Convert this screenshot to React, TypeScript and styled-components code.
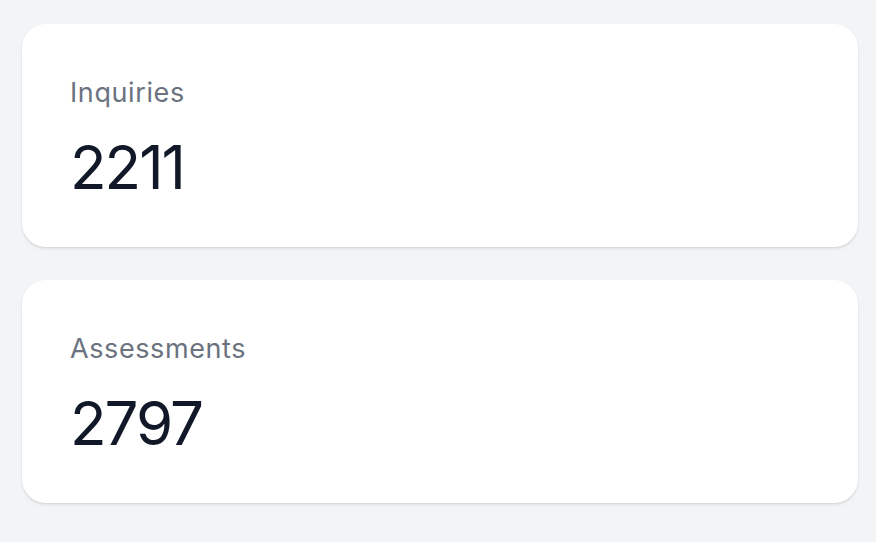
import React, { type FC } from 'react'
import styled, { createGlobalStyle } from 'styled-components'

const GlobalStyle = createGlobalStyle`
	html, body {
		margin: 0;
		padding: 0;
		background: #f3f4f6;
		font-family: Inter, 'Noto Sans', sans-serif;
	}
`

const Page = styled.main`
	display: flex;
	flex-direction: column;
	gap: 33px;
	padding: 24px 18px 24px 22px;
`

const Card = styled.section`
	background: #ffffff;
	border-radius: 24px;
	height: 223px;
	box-sizing: border-box;
	padding: 55px 48px 0;
	box-shadow: 0 2px 3px rgba(0, 0, 0, 0.08), 0 1px 2px rgba(0, 0, 0, 0.05);
	display: flex;
	flex-direction: column;
`

const Label = styled.p`
	margin: 0;
	font-size: 27px;
	line-height: 1;
	letter-spacing: 0.6px;
	color: #6b7280;
`

const Value = styled.p`
	margin: 0;
	margin-top: 31px;
	font-size: 60px;
	line-height: 1;
	font-weight: 400;
	color: #111827;
	letter-spacing: -2px;
`

type Stat = {
	label: string
	value: number
}

const stats: Stat[] = [
	{ label: 'Inquiries', value: 2211 },
	{ label: 'Assessments', value: 2797 },
]

const StatCard: FC<Stat> = ({ label, value }) => (
	<Card>
		<Label>{label}</Label>
		<Value>{value}</Value>
	</Card>
)

const App: FC = () => (
	<>
		<GlobalStyle />
		<Page>
			{stats.map((s) => (
				<StatCard key={s.label} {...s} />
			))}
		</Page>
	</>
)

export default App
